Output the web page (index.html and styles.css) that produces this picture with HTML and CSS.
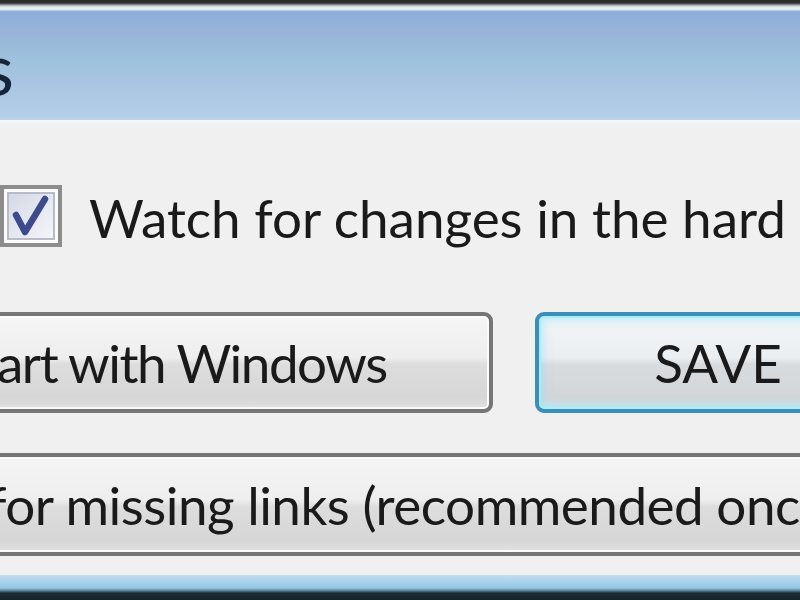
FILE: index.html
```html
<!DOCTYPE html>
<html>
<head>
<meta charset="utf-8">
<link rel="stylesheet" href="styles.css">
</head>
<body>
<div class="win">
  <div class="frame-top"></div>
  <div class="titlebar">
    <div class="title"><span>Settings</span></div>
  </div>
  <div class="client">
    <div class="row-check">
      <div class="checkbox">
        <div class="checkbox-inner">
          <svg class="tick" width="44" height="44" viewBox="0 0 44 44"><path d="M7 21 L16 38 L36 5" fill="none" stroke="#3e4a8e" stroke-width="6.5" stroke-linecap="round" stroke-linejoin="round"/></svg>
        </div>
      </div>
      <span class="label">Watch for changes in the hard drive</span>
    </div>
    <div class="row-buttons">
      <div class="btn btn-start"><span class="clip"><span>St</span></span><span>art with Windows</span></div>
      <div class="btn btn-save"><span>SAVE</span></div>
    </div>
    <div class="btn btn-scan"><span class="clip"><span>Scan</span></span><span>for missing links (recommended once a week)</span></div>
  </div>
  <div class="frame-bottom"></div>
</div>
</body>
</html>
```
FILE: styles.css
```css
html, body {
  margin: 0;
  padding: 0;
  width: 800px;
  height: 600px;
  overflow: hidden;
  background: #f0f0f0;
}

.win {
  width: 800px;
  height: 600px;
  display: flex;
  flex-direction: column;
  overflow: hidden;
  font-family: "Lato", "Liberation Sans", sans-serif;
  color: #1a1a1a;
}

.frame-top {
  height: 11px;
  flex: none;
  background: linear-gradient(#262a2a 0, #2e3232 3px, #c8d0d0 6px, #eef2f2 8px, #dde6ee 10px, #9ab6de 11px);
}

.titlebar {
  height: 109px;
  flex: none;
  display: flex;
  align-items: flex-start;
  background: linear-gradient(#8eaedc 0%, #98b4d8 20%, #9dc2dc 45%, #a8c4e0 65%, #b2cee8 95%, #bcd4ea 100%);
}

.title {
  width: 14px;
  margin-top: 20px;
  display: flex;
  justify-content: flex-end;
  font-size: 72px;
  line-height: 72px;
  color: #14273a;
  white-space: nowrap;
}

.client {
  flex: 1;
  display: flex;
  flex-direction: column;
  padding-top: 65px;
  background: linear-gradient(#f6f8fa 0, #f0f0f0 6px);
}

.row-check {
  display: flex;
  align-items: flex-start;
  gap: 27px;
}

.checkbox {
  width: 62px;
  height: 62px;
  box-sizing: border-box;
  border: 4px solid #8c8c8c;
  background: #fcfcfc;
  padding: 3px;
  flex: none;
}

.checkbox-inner {
  width: 100%;
  height: 100%;
  box-sizing: border-box;
  border: 2px solid #b8bcc8;
  background: linear-gradient(135deg, #d4d8e4 0%, #e6e9f0 55%, #f4f5f8 100%);
  display: flex;
  align-items: center;
  justify-content: center;
}

.tick {
  display: block;
}

.label {
  font-size: 53px;
  line-height: 53px;
  margin-top: 6px;
  white-space: nowrap;
}

.row-buttons {
  display: flex;
  margin-top: 65px;
  gap: 42px;
}

.btn {
  box-sizing: border-box;
  border: 4px solid #767676;
  border-radius: 9px;
  background: linear-gradient(#f5f5f5 0%, #eeeeee 45%, #dddddd 52%, #d6d6d6 88%, #e2e2e2 100%);
  box-shadow: inset 0 0 0 2px #fbfbfb;
  display: flex;
  align-items: center;
  font-size: 53px;
  line-height: 53px;
  white-space: nowrap;
  flex: none;
  overflow: hidden;
}

.clip {
  display: inline-flex;
  width: 0;
  justify-content: flex-end;
}

.btn-start {
  width: 513px;
  height: 101px;
  margin-left: -20px;
  padding-left: 13px;
  letter-spacing: -1.5px;
}

.btn-save {
  width: 366px;
  height: 101px;
  justify-content: center;
  border-color: #3b8fb6;
  background: linear-gradient(#f2f6f8 0%, #eaeef0 45%, #d8dcde 52%, #d2d6d8 88%, #dde4e8 100%);
  box-shadow: inset 0 0 0 2px #a6eefc, inset 0 0 10px 4px rgba(140, 225, 248, 0.55);
}

.btn-scan {
  margin-top: 40px;
  margin-left: -20px;
  width: 860px;
  height: 103px;
  padding-left: 4px;
  letter-spacing: -0.5px;
}

.frame-bottom {
  height: 25px;
  flex: none;
  background: linear-gradient(#c4dcec 0, #a8d2ec 7px, #94c6e2 13px, #507888 16px, #1e2c34 18px, #18242c 25px);
}
```
